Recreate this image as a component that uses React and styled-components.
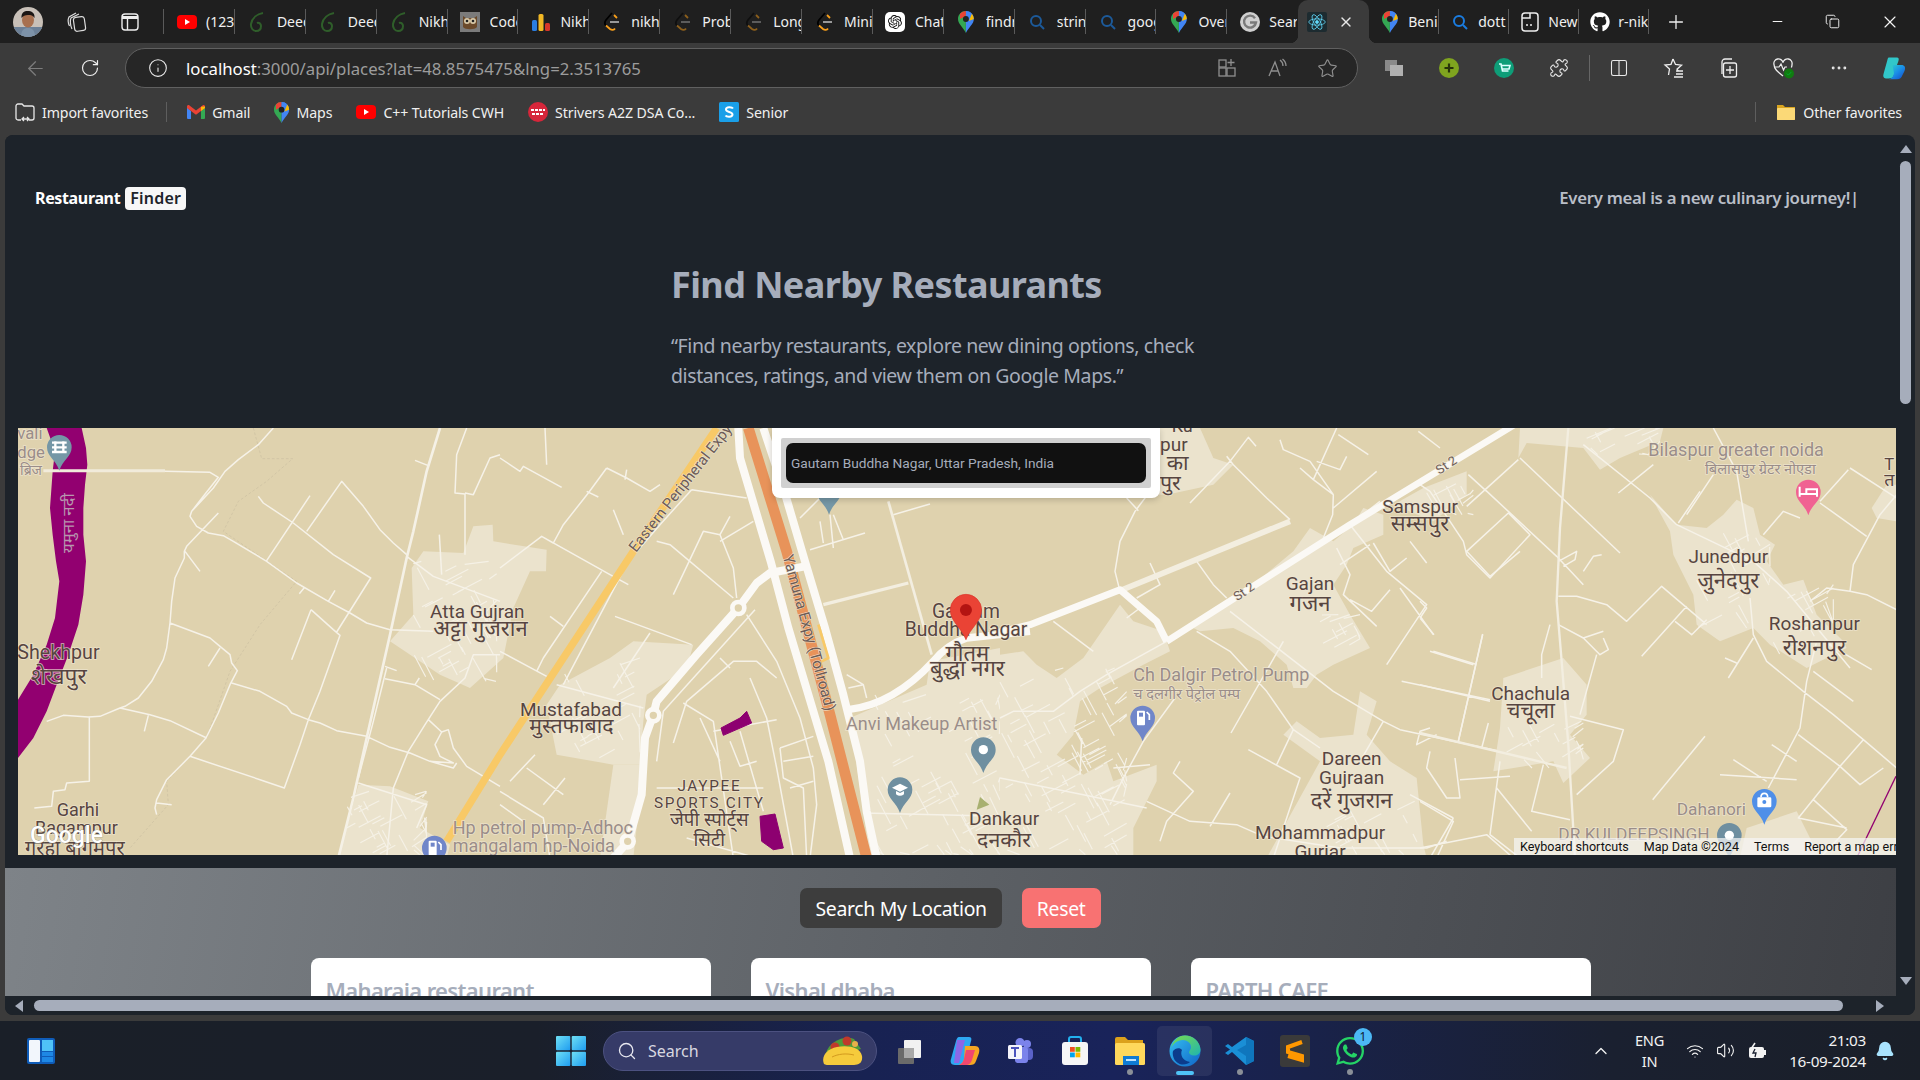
import React from 'react';
import styled, { createGlobalStyle } from 'styled-components';
import { ArrowLeft, RotateCw, Info, Star, Plus, Minus, X, Copy, Ellipsis, ChevronUp, Wifi, Volume2, Bell, Search, Puzzle, Columns2 } from 'lucide-react';
import { FaGithub, FaWhatsapp } from 'react-icons/fa';
import { SiOpenai } from 'react-icons/si';

const UI = '"Noto Sans", "Open Sans", Arial, sans-serif';
const MAP = 'Roboto, "Noto Sans", "Noto Sans Devanagari", sans-serif';

const Global = createGlobalStyle`
  html, body { margin: 0; padding: 0; background: #3b3b3b; overflow: hidden; }
  * { box-sizing: border-box; }
`;

const Screen = styled.div`
  width: 1920px; height: 1080px; display: flex; flex-direction: column; overflow: hidden;
  background: #3b3b3b; font-family: ${UI}; color: #fff;
`;

/* ---------- tab strip ---------- */
const TabStrip = styled.div`
  height: 43px; background: #1f1f1f; display: flex; align-items: stretch; flex: none;
`;
const Leading = styled.div`
  width: 164px; display: flex; align-items: center; padding-left: 13px; gap: 23px; flex: none; position: relative;
  &::after { content: ''; position: absolute; right: 0; top: 9px; height: 25px; width: 1px; background: #5a5a5a; }
`;
const VerticalSlot = styled.span`
  margin-left: 10px; display: flex;
`;
const Tab = styled.div`
  width: ${p => p.$w || 70.9}px; flex: none; position: relative; display: flex; align-items: center;
  &::after { content: ''; position: absolute; right: 0; top: 9px; height: 25px; width: 1px; background: ${p => p.$noSep ? 'transparent' : '#5a5a5a'}; }
`;
const TabIconSlot = styled.span`
  width: ${p => p.$w || 42}px; flex: none; display: flex; align-items: center; justify-content: center; padding-left: 3px;
`;
const TabLabel = styled.span`
  font-size: 14px; color: #f0f0f0; white-space: nowrap; overflow: hidden; flex: 1; margin-right: 1px; line-height: 20px;
`;
const ActiveTab = styled.div`
  width: 71px; flex: none; background: #3b3b3b; border-radius: 10px 10px 0 0; position: relative;
  display: flex; align-items: center; padding-left: 9px; gap: 11px;
  &::before, &::after { content: ''; position: absolute; bottom: 0; width: 8px; height: 8px; }
  &::before { left: -8px; background: radial-gradient(circle at 0 0, transparent 8px, #3b3b3b 8.5px); }
  &::after { right: -8px; background: radial-gradient(circle at 100% 0, transparent 8px, #3b3b3b 8.5px); }
`;
const ReactChip = styled.span`
  width: 20px; height: 20px; background: #1d2b30; border-radius: 2px; display: flex; align-items: center; justify-content: center;
`;
const NewTab = styled.div`
  width: 54px; display: flex; align-items: center; justify-content: center; flex: none;
`;
const WindowControls = styled.div`
  margin-left: auto; display: flex; align-items: center; width: 172px; flex: none; justify-content: space-between; padding: 0 20px 0 22px;
`;

/* ---------- toolbar ---------- */
const Toolbar = styled.div`
  height: 50px; background: #3b3b3b; display: flex; align-items: center; flex: none; padding: 0 6px 0 24px;
`;
const NavButtons = styled.div`
  display: flex; align-items: center; gap: 33px; width: 101px; flex: none;
`;
const AddressBar = styled.div`
  width: 1233px; height: 40px; flex: none; border: 1px solid #606060; border-radius: 20px; background: #262626;
  display: flex; align-items: center; padding: 0 19px 0 22px;
`;
const UrlText = styled.div`
  font-size: 16.75px; margin-left: 18px; color: #9c9c9c; white-space: nowrap; flex: 1; letter-spacing: 0;
  b { font-weight: 400; color: #fff; }
`;
const AddressTools = styled.div`
  display: flex; align-items: center; gap: 30px; color: #8f8f8f;
`;
const ToolGroup = styled.div`
  display: flex; align-items: center; gap: 31px; padding-left: 24px;
`;
const ToolSlot = styled.span`
  width: 24px; height: 24px; display: flex; align-items: center; justify-content: center; flex: none; color: #e8e8e8;
`;
const ToolSep = styled.span`
  width: 1px; height: 26px; background: #666; margin: 0 -13.5px; flex: none;
`;

/* ---------- bookmarks ---------- */
const Bookmarks = styled.div`
  height: 42px; background: #3b3b3b; display: flex; align-items: center; flex: none; padding: 0 18px 4px 15px;
`;
const Bookmark = styled.div`
  display: flex; align-items: center; gap: 7px; font-size: 14.15px; color: #f0f0f0; white-space: nowrap; margin-right: ${p => p.$mr ?? 24}px; letter-spacing: -0.1px;
`;
const BookSep = styled.span`
  width: 1px; height: 20px; background: #5e5e5e; flex: none; margin: 0 20px 0 18px;
`;
const BookRight = styled.div`
  margin-left: auto; display: flex; align-items: center;
`;

/* ---------- page window ---------- */
const WindowBody = styled.div`
  height: 880px; flex: none; margin: 0 5px 6px 5px; background: #1d232a; border-radius: 8px; display: flex; flex-direction: column; overflow: hidden;
`;
const ScrollRow = styled.div`
  flex: 1; display: flex; min-height: 0;
`;
const Page = styled.main`
  width: 1891px; flex: none; display: flex; flex-direction: column; overflow: hidden; background: #1d232a;
`;
const Nav = styled.nav`
  height: 130px; padding: 51px 37px 0 30px; display: flex; justify-content: space-between; align-items: flex-start; flex: none;
`;
const Brand = styled.div`
  display: flex; align-items: center; font-size: 16px; font-weight: 700; color: #fff; height: 24px; letter-spacing: -0.35px; gap: 4px;
`;
const BrandBadge = styled.span`
  background: #f7f7f7; color: #1d232a; border-radius: 4px; padding: 0 5px; height: 23px; line-height: 23px; font-weight: 600; letter-spacing: 0.2px; margin-left: 1px;
`;
const Tagline = styled.div`
  font-size: 16.8px; font-weight: 600; color: #b9bec7; line-height: 24px; letter-spacing: -0.28px; white-space: nowrap; margin-top: 0;
`;
const Hero = styled.section`
  margin-left: 666px; width: 600px; flex: none; margin-bottom: 36px;
`;
const Title = styled.h1`
  margin: 0 0 26px; font-size: 36px; line-height: 40px; font-weight: 700; color: #a6adbb; letter-spacing: -0.58px;
`;
const Lead = styled.p`
  margin: 0 0 1px; font-size: 19.5px; line-height: 30px; color: #a6adbb; width: 560px; letter-spacing: -0.4px;
`;
const MapFrame = styled.div`
  width: 1878px; height: 427px; margin-left: 13px; flex: none; position: relative; overflow: hidden; background: #dfd2ae;
  svg { display: block; }
`;
const PopupCard = styled.div`
  position: absolute; left: 754px; top: 0; width: 388px; height: 70px; background: #fff; border-radius: 0 0 8px 8px;
  padding: 10px 9px 0; box-shadow: 0 2px 6px rgba(0,0,0,.18);
`;
const PopupWell = styled.div`
  background: #d0d0d0; padding: 5px; height: 50px; border-radius: 2px;
`;
const PopupInput = styled.div`
  height: 40px; background: #111; border-radius: 7px; color: #a6adbb; font-family: Roboto, sans-serif; font-size: 13.7px;
  display: flex; align-items: center; padding-left: 5px; white-space: nowrap;
`;
const Attribution = styled.div`
  position: absolute; left: 1496px; bottom: 0; height: 17px; width: 400px; background: rgba(245,245,245,.72);
  display: flex; align-items: center; font-family: Roboto, sans-serif; font-size: 12.55px; color: #111; white-space: nowrap; padding-left: 6px;
  span { margin-right: 15px; }
`;
const Results = styled.section`
  flex: 1; margin-top: 13px; min-height: 0; background: linear-gradient(100deg, #7e8388 0%, #5c6065 50%, #3d3f44 100%);
  padding-top: 20px; overflow: hidden;
`;
const ActionRow = styled.div`
  display: flex; justify-content: center; gap: 20px;
`;
const ActionButton = styled.button`
  height: 40px; border: 0; border-radius: 7px; padding: 0 15px; font-family: ${UI}; font-size: 19.4px; letter-spacing: -0.3px;
  color: #fff; background: ${p => p.$danger ? '#f87272' : '#3d3d3d'};
`;
const CardRow = styled.div`
  display: flex; justify-content: center; gap: 40px; margin-top: 30px;
`;
const Card = styled.article`
  width: 400px; height: 120px; background: #fff; border-radius: 8px; padding: 16px 15px;
`;
const CardTitle = styled.h2`
  margin: 0; font-size: 22px; line-height: 32px; font-weight: 600; color: #a6adbb; letter-spacing: -0.65px;
`;
const VScroll = styled.div`
  flex: 1; display: flex; flex-direction: column; align-items: center; padding: 10px 0 11px; color: #a6adbb;
`;
const VThumb = styled.div`
  width: 11px; height: 243px; background: #a6adbb; border-radius: 6px; margin: 8px 0 auto;
`;
const HScroll = styled.div`
  height: 19px; flex: none; display: flex; align-items: center; padding: 0 28px 0 10px; gap: 11px; background: #1d232a;
`;
const HThumb = styled.div`
  width: 1809px; height: 11px; background: #a6adbb; border-radius: 6px; flex: none;
`;
const ArrowUp = styled.span`
  width: 0; height: 0; border-left: 6px solid transparent; border-right: 6px solid transparent; border-bottom: 8px solid currentColor;
`;
const ArrowDown = styled.span`
  width: 0; height: 0; border-left: 6px solid transparent; border-right: 6px solid transparent; border-top: 8px solid currentColor;
`;
const ArrowL = styled.span`
  width: 0; height: 0; border-top: 6px solid transparent; border-bottom: 6px solid transparent; border-right: 8px solid #a6adbb; flex: none;
`;
const ArrowR = styled.span`
  width: 0; height: 0; border-top: 6px solid transparent; border-bottom: 6px solid transparent; border-left: 8px solid #a6adbb; flex: none; margin-left: 22px;
`;

/* ---------- taskbar ---------- */
const Taskbar = styled.footer`
  height: 59px; flex: 1; display: grid; grid-template-columns: 556px auto 1fr; align-items: center; position: relative;
  background: linear-gradient(90deg, #1a1f28 0%, #1a1f2a 28%, #182252 45%, #19235a 58%, #19224a 68%, #1a2030 84%, #1a1f28 100%);
`;
const TaskLeft = styled.div`
  padding-left: 26px; display: flex; align-items: center;
`;
const TaskCenter = styled.div`
  display: flex; align-items: center;
`;
const StartSlot = styled.div`
  width: 47px; flex: none; display: flex;
`;
const SearchPill = styled.div`
  width: 274px; height: 40px; flex: none; border-radius: 20px; background: #363b68; border: 1px solid #4c5180; display: flex; align-items: center; padding: 0 12px 0 13px;
  font-size: 16px; color: #d8d8e0; gap: 11px; margin-right: 5px;
  svg:last-child { margin-left: auto; }
`;
const TaskSlot = styled.div`
  width: 55px; height: 50px; flex: none; position: relative; display: flex; align-items: center; justify-content: center;
  border-radius: 5px; background: ${p => p.$active ? 'rgba(255,255,255,.07)' : 'transparent'};
  &::after {
    content: ''; display: ${p => p.$dot ? 'block' : 'none'}; position: absolute; bottom: 1px; left: 50%; transform: translateX(-50%);
    width: ${p => p.$active ? 18 : 6}px; height: ${p => p.$active ? 4 : 6}px; border-radius: 3px; background: ${p => p.$active ? '#4fc3f7' : '#8a8f98'};
  }
`;
const Badge = styled.span`
  position: absolute; top: 2px; right: 5px; width: 18px; height: 18px; border-radius: 50%; background: #4cb8f5; color: #102030; font-size: 12px; display: flex; align-items: center; justify-content: center;
`;
const Tray = styled.div`
  display: flex; align-items: center; justify-content: flex-end; padding-right: 25px; color: #f2f2f2;
`;
const Lang = styled.div`
  font-size: 14.6px; line-height: 21px; text-align: center; margin: 0 22px 0 24px; letter-spacing: -0.2px;
`;
const TrayIcons = styled.div`
  display: flex; align-items: center; gap: 12px; margin-right: 22px;
`;
const Clock = styled.div`
  font-size: 15.3px; line-height: 21px; text-align: right; margin-right: 9px; letter-spacing: -0.3px;
`;

/* ---------- icons ---------- */
const Yt = ({ s = 20 }) => <svg width={s} height={s} viewBox="0 0 20 20"><rect x="0" y="3" width="20" height="14" rx="4" fill="#f00" /><path d="M8 7l5 3-5 3z" fill="#fff" /></svg>;
const Leaf = () => <svg width="16" height="20" viewBox="0 0 16 20" fill="none" stroke="#2f5e2a" strokeWidth="2"><path d="M14 1C8 2 3 6 2 12c-.5 4 2 7 5 7 3 0 5-2 5-5 0-2-2-4-4-3" /></svg>;
const Owl = () => <svg width="20" height="20" viewBox="0 0 20 20"><rect width="20" height="20" fill="#7b7b7b" /><path d="M3 4l3 2h8l3-2v11c-2 3-12 3-14 0z" fill="#6b4a2b" /><circle cx="7" cy="9" r="3" fill="#d8c9a8" /><circle cx="13" cy="9" r="3" fill="#d8c9a8" /><circle cx="7" cy="9" r="1.3" fill="#222" /><circle cx="13" cy="9" r="1.3" fill="#222" /></svg>;
const Bars = () => <svg width="20" height="20" viewBox="0 0 20 20"><rect x="1" y="8" width="5" height="11" rx="1.5" fill="#2a7de1" /><rect x="7.5" y="2" width="5" height="17" rx="1.5" fill="#f2b824" /><rect x="14" y="11" width="5" height="8" rx="1.5" fill="#d8362a" /></svg>;
const Lc = ({ dim }) => <svg width="18" height="20" viewBox="0 0 18 20" fill="none" strokeWidth="1.8" opacity={dim ? .5 : 1}><path d="M9 1L3 8c-1.500 2-1.500 4 0 5.500" stroke="#000" /><path d="M3 13.500L7 17c2 1.500 4 1 5-.5" stroke="#f89f1b" /><path d="M11 3l3 3" stroke="#f89f1b" /><path d="M7 10h9" stroke="#a8a8a8" /></svg>;
const Gpt = () => <svg width="20" height="20" viewBox="0 0 20 20"><rect width="20" height="20" rx="5" fill="#fff" /><g transform="translate(3 3) scale(.58)"><SiOpenai size={24} color="#111" /></g></svg>;
const MapsIcon = ({ s = 22 }) => <svg width={s * .72} height={s} viewBox="0 0 16 22"><path d="M8 0C3.6 0 0 3.5 0 8c0 5 5 8 8 14z" fill="#34a853" /><path d="M8 0c4.4 0 8 3.5 8 8 0 5-5 8-8 14z" fill="#4285f4" /><path d="M2 2.6A8 8 0 0 1 8 0v5L2 8z" fill="#ea4335" /><path d="M8 0a8 8 0 0 1 6 2.6L8 8z" fill="#4285f4" /><path d="M14 2.6A8 8 0 0 1 16 8l-5 2z" fill="#fbbc04" /><circle cx="8" cy="8" r="3" fill="#222" /></svg>;
const Magn = ({ c = '#1c5a9a' }) => <svg width="18" height="18" viewBox="0 0 18 18" fill="none" stroke={c} strokeWidth="2"><circle cx="8" cy="8" r="5" /><path d="M12 12l4 4" /></svg>;
const GG = () => <svg width="20" height="20" viewBox="0 0 20 20" fill="none"><circle cx="10" cy="10" r="10" fill="#d0d0d0" /><path d="M15 6.2A6 6 0 1 0 16 10.5h-6" stroke="#7a7a7a" strokeWidth="2.4" /></svg>;
const Atom = () => <svg width="18" height="18" viewBox="-12 -12 24 24" fill="none" stroke="#61dafb" strokeWidth="1"><circle r="2" fill="#61dafb" /><ellipse rx="11" ry="4.2" /><ellipse rx="11" ry="4.2" transform="rotate(60)" /><ellipse rx="11" ry="4.2" transform="rotate(120)" /></svg>;
const NewWin = () => <svg width="18" height="20" viewBox="0 0 18 20" fill="none" stroke="#eee" strokeWidth="1.5"><rect x="1" y="1" width="16" height="18" rx="3" /><path d="M1 6h8V1" /><path d="M5 13h8" strokeDasharray="2 2" /></svg>;
const Gh = () => <FaGithub size={20} color="#fff" />;

const favicon = { yt: <Yt />, leaf: <Leaf />, owl: <Owl />, bars: <Bars />, lc: <Lc />, lcd: <Lc dim />, gpt: <Gpt />, maps: <MapsIcon />, sd: <Magn />, sb: <Magn c="#1a7ce0" />, gg: <GG />, nw: <NewWin />, gh: <Gh /> };

const Avatar = () => <svg width="30" height="30" viewBox="0 0 30 30"><defs><clipPath id="av"><circle cx="15" cy="15" r="15" /></clipPath></defs><g clipPath="url(#av)"><rect width="30" height="30" fill="#c8c0b8" /><rect y="20" width="30" height="10" fill="#6c8097" /><path d="M8 30c0-7 3-9 7-9s7 2 7 9z" fill="#7d92a8" /><ellipse cx="15" cy="13" rx="6" ry="7.5" fill="#a8704f" /><path d="M8.5 11C8 5 12 3.5 16 4c4 .5 6 3 5.5 7-1.5-2.5-3.5-3-6.5-3s-5 1-6.5 3z" fill="#1b1614" /></g></svg>;
const Workspaces = () => <svg width="22" height="22" viewBox="0 0 22 22" fill="none" stroke="#ddd" strokeWidth="1.2"><rect x="8" y="6" width="11" height="14" rx="2.5" transform="rotate(-8 13 13)" /><path d="M6 18C4 14 4 9 5 7l8-4" /><path d="M3.500 15C2 12 2 8 3 6l7-4" /></svg>;
const VerticalTabs = () => <svg width="18" height="18" viewBox="0 0 18 18" fill="none" stroke="#eee" strokeWidth="1.4"><rect x="1" y="1" width="16" height="16" rx="3" /><path d="M1 4.5h16" strokeWidth="3" /><path d="M6.5 4.5V17" /></svg>;
const SplitAdd = () => <svg width="20" height="20" viewBox="0 0 20 20" fill="none" stroke="#8f8f8f" strokeWidth="1.3"><rect x="2" y="2" width="7" height="7" /><rect x="2" y="10" width="7" height="8" /><rect x="10" y="10" width="8" height="8" /><path d="M14 1v7M10.5 4.500h7" /></svg>;
const ReadAloud = () => <svg width="20" height="20" viewBox="0 0 20 20" fill="none" stroke="#8f8f8f" strokeWidth="1.3"><path d="M2 18L8 4l5 14M4.500 13h7" /><path d="M13 2c2 1.500 3 3.500 3 6M15.500 1c2.500 2 3.500 4.500 3.500 7" /></svg>;
const GrayTabs = () => <svg width="20" height="20" viewBox="0 0 20 20"><rect x="1" y="2" width="12" height="11" fill="#8a8a8a" /><rect x="6" y="7" width="13" height="11" fill="#b0b0b0" /></svg>;
const GreenPlus = () => <svg width="20" height="20" viewBox="0 0 20 20"><circle cx="10" cy="10" r="10" fill="#7fa41f" /><path d="M10 5.500v9M5.500 10h9" stroke="#27320a" strokeWidth="2.2" /></svg>;
const Cart = () => <svg width="20" height="20" viewBox="0 0 20 20"><circle cx="10" cy="10" r="10" fill="#0e9d78" /><path d="M5 6h2l1.500 7h6M8 7.500h8l-1 3.500H8.500" fill="none" stroke="#dff" strokeWidth="1.6" /></svg>;
const Collections = () => <svg width="22" height="22" viewBox="0 0 22 22" fill="none" stroke="#eee" strokeWidth="1.3"><rect x="5.500" y="6" width="13" height="14" rx="2" /><path d="M12 9v8M8 13h8" /><path d="M4 17V5a3 3 0 0 1 3-3h7" /></svg>;
const FavList = () => <svg width="22" height="22" viewBox="0 0 22 22" fill="none" stroke="#eee" strokeWidth="1.3"><path d="M10 2l2.500 5.500 6 .7-4.500 4 1.300 2M5.500 18l1-6-4.500-4 6-.7L10 2" /><path d="M13 14h7M13 17h7M11 20h9" /></svg>;
const HeartCheck = () => <svg width="24" height="24" viewBox="0 0 24 24" fill="none"><path d="M11 20C6 16 2 13 2 8.500A4.500 4.500 0 0 1 11 6.500 4.500 4.500 0 0 1 20 8.500c0 1-.2 2-.6 3" stroke="#eee" strokeWidth="1.3" /><path d="M3 11h4l2-3 2.500 6L13 11h2" stroke="#eee" strokeWidth="1.2" /><circle cx="17" cy="17.500" r="5" fill="#107c10" /><path d="M14.800 17.500l1.600 1.600 2.800-3" stroke="#0a3" strokeWidth="1" /></svg>;
const CopilotTb = () => <svg width="32" height="32" viewBox="0 0 32 32"><defs><linearGradient id="cb" x1="0" y1="0" x2="1" y2="1"><stop offset="0" stopColor="#2fd6c4" /><stop offset=".5" stopColor="#1a8fe8" /><stop offset="1" stopColor="#1549c8" /></linearGradient></defs><path d="M9 2h11c4 0 2 5 0 10l-3 10c-1 4-2 8-8 8H5c-3 0-4-3-3-6L7 6c.4-2 1-4 2-4z" fill="#31c7c9" /><path d="M14 12h12c4 0 6 3 4 8l-3 6c-1 3-3 5-7 5H9c5-1 6-4 7-8z" fill="url(#cb)" /></svg>;
const ImportFav = () => <svg width="20" height="20" viewBox="0 0 20 20" fill="none" stroke="#e8e8e8" strokeWidth="1.3"><path d="M6 18H3a2 2 0 0 1-2-2V4a2 2 0 0 1 2-2h4l2 2h8a2 2 0 0 1 2 2v10a2 2 0 0 1-2 2h-3" /><path d="M7 17h7M9 15l-2 2 2 2M12 15l2 2-2 2" /></svg>;
const Gmail = () => <svg width="18" height="14" viewBox="0 0 18 14"><path d="M0 2.500V13a1 1 0 0 0 1 1h3V6z" fill="#4285f4" /><path d="M18 2.500V13a1 1 0 0 1-1 1h-3V6z" fill="#34a853" /><path d="M0 1.500C0 .2 1.500-.4 2.500.4L9 5.500 15.500.4C16.500-.4 18 .2 18 1.500v1.500l-4 3-5 3.800L4 6 0 3z" fill="#ea4335" /><path d="M14 1.800L18 1.500V3l-4 3z" fill="#fbbc04" /></svg>;
const Tuf = () => <svg width="20" height="20" viewBox="0 0 20 20"><circle cx="10" cy="10" r="10" fill="#d6263a" /><path d="M3 8h14M4 12h12" stroke="#fff" strokeWidth="2.200" strokeDasharray="3 1" /></svg>;
const SBook = () => <svg width="20" height="20" viewBox="0 0 20 20"><rect width="20" height="20" rx="1.500" fill="#1a9fe8" /><path d="M14 6.500C13 5 7 4.500 7 7.500c0 3 6.500 2 6.500 5 0 3-6 2.500-7 1" fill="none" stroke="#fff" strokeWidth="2" /></svg>;
const Folder = () => <svg width="20" height="20" viewBox="0 0 20 20"><path d="M1 3h6l2 2h10v13H1z" fill="#d9a520" /><rect x="1" y="6" width="18" height="12" rx="1" fill="#fbd977" /></svg>;

const Widgets = () => <svg width="30" height="30" viewBox="0 0 30 30"><rect x="1" y="2" width="28" height="26" rx="2" fill="#0f5cb8" /><rect x="3" y="4" width="11" height="22" rx="1" fill="#f2f6fc" /><rect x="16" y="4" width="11" height="11" fill="#4fc3f7" /><rect x="16" y="16" width="11" height="4" fill="#1e88e5" /><rect x="16" y="21" width="11" height="5" fill="#1e88e5" /></svg>;
const WinLogo = () => <svg width="30" height="30" viewBox="0 0 30 30"><defs><linearGradient id="wl" x1="0" y1="0" x2="1" y2="1"><stop offset="0" stopColor="#6fe0f5" /><stop offset="1" stopColor="#1e9cf0" /></linearGradient></defs><rect x="0" y="0" width="14.300" height="14.300" rx="1" fill="url(#wl)" /><rect x="15.700" y="0" width="14.300" height="14.300" rx="1" fill="url(#wl)" /><rect x="0" y="15.700" width="14.300" height="14.300" rx="1" fill="url(#wl)" /><rect x="15.700" y="15.700" width="14.300" height="14.300" rx="1" fill="url(#wl)" /></svg>;
const Taco = () => <svg width="42" height="32" viewBox="0 0 42 32"><path d="M4 18C7 7 22 0 32 4l7 10-30 9z" fill="#4f9a3a" /><circle cx="13" cy="12" r="4.500" fill="#c0392b" /><circle cx="25" cy="6" r="4.500" fill="#c0392b" /><circle cx="33" cy="9" r="3" fill="#e8b04a" /><path d="M2 29c-3-7 2-15 13-17 11-2 23 0 25 9 1 6-3 9-8 9H9c-3 0-6 0-7-1z" fill="#f6cb3c" /><path d="M10 22c6-3 14-4 22-2" stroke="#d39a1e" strokeWidth="1" fill="none" /></svg>;
const TaskView = () => <svg width="28" height="28" viewBox="0 0 28 28"><rect x="2" y="11" width="16" height="16" rx="1" fill="#6a6a6a" /><rect x="8" y="3" width="17" height="18" rx="1" fill="#f2f2f2" /><rect x="8" y="11" width="10" height="10" fill="#a9a9a9" /></svg>;
const CopilotBar = () => <svg width="30" height="30" viewBox="0 0 30 30"><path d="M9 1h10c4 0 2 4 1 8l-4 14c-1 4-3 6-7 6H5c-4 0-5-3-4-6L6 5c.5-2 1.500-4 3-4z" fill="#2ea8f2" /><path d="M7 4h8L9 27H4z" fill="#9b5de5" opacity=".85" /><path d="M15 10h10c4 0 5 3 4 7l-3 8c-1 3-3 4-6 4H9c3-1 4-3 5-6z" fill="#f5a623" /><path d="M16 14h9l-3 10c-1 3-3 5-6 5H9c3-1 4-3 5-6z" fill="#f0476f" /></svg>;
const Teams = () => <svg width="28" height="28" viewBox="0 0 28 28"><circle cx="21" cy="7" r="4" fill="#7b83eb" /><rect x="14" y="11" width="13" height="12" rx="4" fill="#5a62c8" /><circle cx="14" cy="5.500" r="4.500" fill="#7b83eb" /><rect x="9" y="10" width="13" height="16" rx="3" fill="#7b83eb" /><rect x="2" y="8" width="14" height="14" rx="1.500" fill="#f4f4fb" /><path d="M5 11h8M9 11v9" stroke="#4b53bc" strokeWidth="2" /></svg>;
const Store = () => <svg width="28" height="30" viewBox="0 0 28 30"><path d="M8 6V3a2 2 0 0 1 2-2h8a2 2 0 0 1 2 2v3" fill="none" stroke="#22b0ee" strokeWidth="2" /><rect x="1" y="6" width="26" height="23" rx="3" fill="#f6f6f6" /><rect x="9" y="11" width="4.800" height="4.800" fill="#f25022" /><rect x="14.500" y="11" width="4.800" height="4.800" fill="#7fba00" /><rect x="9" y="16.500" width="4.800" height="4.800" fill="#00a4ef" /><rect x="14.500" y="16.500" width="4.800" height="4.800" fill="#ffb900" /></svg>;
const Explorer = () => <svg width="30" height="30" viewBox="0 0 30 30"><path d="M0 3a2 2 0 0 1 2-2h8l3 3h15v22H0z" fill="#dca11c" /><rect y="7" width="30" height="22" rx="1.500" fill="#ffd85c" /><rect x="8" y="20" width="16" height="9" fill="#0f7bd4" /><rect x="11" y="23" width="10" height="2" fill="#bfe3ff" /></svg>;
const Edge = () => <svg width="32" height="32" viewBox="0 0 32 32"><defs><linearGradient id="eg" x1="0" y1="0" x2="1" y2="1"><stop offset="0" stopColor="#35c1f1" /><stop offset="1" stopColor="#1065c8" /></linearGradient><linearGradient id="eg2" x1="0" y1="0" x2="1" y2="1"><stop offset="0" stopColor="#7bdc4b" /><stop offset="1" stopColor="#1fb5b0" /></linearGradient></defs><circle cx="16" cy="16" r="15.500" fill="url(#eg)" /><path d="M2 13C4 5 10 .5 16 .5c8 0 15 6 15.500 14 0 4-3 6-6.500 6-3 0-5-1.500-5-3 0-2 2-3 2-5.500 0-4-4-7-8-7C8 5 4 9 2 13z" fill="url(#eg2)" /><path d="M13 15c-2 4 0 11 8 12-2 2-8 4-12 1-4-2-6-8-5-12 2-3 7-4 9-1z" fill="#0c3c8c" /></svg>;
const VsCode = () => <svg width="30" height="30" viewBox="0 0 30 30"><path d="M21 1l8 4v20l-8 4L7 16l-4 3-3-2 5-3.500L0 10l3-2 4 3z" fill="#1a8fd6" /><path d="M21 1l8 4v20l-8 4V20l-9-6 9-5z" fill="#0f76bd" /></svg>;
const Sublime = () => <svg width="30" height="32" viewBox="0 0 30 32"><rect width="30" height="32" rx="3" fill="#3a3a3a" /><path d="M22 7L8 12v5l14 4v4L8 21" fill="none" stroke="#ff9800" strokeWidth="4" /></svg>;
const BatteryPlug = () => <svg width="20" height="20" viewBox="0 0 20 20" fill="none"><path d="M8 2L4 8" stroke="#f2f2f2" strokeWidth="1.500" /><rect x="2" y="6" width="15" height="11" rx="2" fill="#f2f2f2" /><rect x="17" y="9" width="2" height="5" fill="#f2f2f2" /><path d="M8 8l-2 4h3l-1 4" stroke="#1a2030" strokeWidth="1.300" /></svg>;

const MapPin = ({ x, y, c, kind }) => (
  <g transform={`translate(${x} ${y})`}>
    <path d="M-37 0a37 37 0 1 1 74 0c0 28-26 36-37 70C-11 36-37 28-37 0z" fill={c} />
    {kind === 'dot' && <circle r="14" fill="#fff" />}
    {kind === 'hat' && <g fill="#fff"><path d="M-24 -6L0 -18 24 -6 0 6z" /><path d="M-12 4v10c8 6 16 6 24 0V4L0 10z" /></g>}
    {kind === 'bridge' && <path d="M-22 -14h44M-22 14h44M-12 -18v34M12 -18v34M-22 0h44" stroke="#fff" strokeWidth="7" fill="none" />}
    {kind === 'fuel' && <g fill="#fff"><rect x="-17" y="-22" width="24" height="44" rx="3" /><rect x="-11" y="-16" width="12" height="12" fill={c} /><path d="M12 -18l8 8v16" stroke="#fff" strokeWidth="5" fill="none" /></g>}
    {kind === 'bed' && <path d="M-26 -16v30M-26 6h52v8M26 6v-14H-6v14" stroke="#fff" strokeWidth="6" fill="none" />}
    {kind === 'bag' && <g><rect x="-21" y="-12" width="42" height="30" rx="4" fill="#fff" /><path d="M-10 -12c0-16 20-16 20 0" fill="none" stroke="#fff" strokeWidth="5" /><circle r="6" cy="2" fill={c} /></g>}
  </g>
);

const rnd = (seed) => { let s = seed; return () => { s = (s * 16807) % 2147483647; return s / 2147483647; }; };
const clutter = (seed, x, y, w, h, n, ang = -28) => {
  const r = rnd(seed); let d = '';
  const rad = ang * Math.PI / 180;
  for (let i = 0; i < n; i++) {
    const px = x + r() * w, py = y + r() * h, len = 25 + r() * 60;
    const a = r() > .5 ? rad : rad + Math.PI / 2;
    const qx = Math.min(x + w, Math.max(x, px + Math.cos(a) * len)), qy = Math.min(y + h, Math.max(y, py + Math.sin(a) * len));
    d += `M${px.toFixed(0)} ${py.toFixed(0)}L${qx.toFixed(0)} ${qy.toFixed(0)}`;
  }
  return d;
};

const regions = [
  {
    x0: 0,
    patches: [
      '1270,370 1390,375 1420,295 1478,290 1480,340 1640,365 1638,430 1590,430 1540,540 1510,690 1410,780 1320,740 1170,640 1240,560 1235,420',
      '1075,1070 1170,1075 1285,1120 1260,1200 1350,1250 1340,1290 1015,1290',
    ],
    clutter: [[11, 1240, 400, 250, 360, 46], [12, 1040, 1090, 240, 190, 34]],
    roads: [
      'M495 130L630 133L655 148L610 205L575 250',
      'M820 0L775 50L715 95L675 130L640 180L575 250L570 265L590 295L625 315L670 323L700 340L800 400L890 465L985 520L1050 555L1100 585L1170 605L1300 610',
      'M655 255L560 355L553 370L553 390L525 450L515 520L510 585L500 660L490 695L455 760L415 810L375 835L360 840L300 865L265 867L190 862L140 880',
      'M555 370L600 430',
      'M775 205L790 225L880 285L1000 380L1112 450L1010 612',
      'M930 203L800 398', 'M920 310L1025 160L1090 235L1140 305L1180 345L1220 380', 'M1005 487L985 520', 'M912 480L898 497',
      'M510 585L630 630L660 655L690 680L695 705L712 728L690 770L655 855L618 930L570 985L500 1055L470 1115L465 1140L470 1160',
      'M660 660L625 715', 'M933 545L1000 605L1020 622L960 790L925 875L900 950L853 1080L780 1055L570 985', 'M933 545L875 695',
      'M360 840L450 860L510 878L620 930', 'M445 862L433 910',
      'M695 765L780 790L860 835L875 855L925 875L960 885L1010 908L1100 925L1170 958L1230 975L1290 1000L1360 1020L1370 1005',
      'M268 867L268 1060L200 1065L195 1085L160 1090L155 1135L103 1140',
      'M1160 720L1120 880L1075 1050', 'M1155 715L1190 728', 'M1155 752L1245 770L1320 815', 'M1245 770L1258 750',
      'M1395 195L1420 200L1470 90L1500 80', 'M1400 0L1370 80L1365 195L1395 198L1395 380', 'M1245 97L1285 113', 'M1318 320L1325 440',
      'M1220 385L1300 445L1500 520', 'M1500 680L1420 680L1395 750L1320 820L1275 890L1225 970L1180 1080L1160 1290',
      'M1285 875L1325 912L1345 905L1360 960L1400 1015L1500 1075', 'M1325 912L1305 950L1320 985L1360 1005L1290 1000',
      'M1075 1065L1280 1130L1250 1200', 'M470 1125L515 1130',
    ],
    majors: [['M130 128L495 128', 9, '#f1ebdb'], ['M1320 0L1280 130L1240 310L1220 390L1170 620L1100 930L1060 1110L1015 1290', 8, '#f5f1e6']],
    dashed: ['M760 0L785 92L878 92L800 160L715 220L670 310L890 460L780 590L690 730L620 930L500 1060L505 1130L390 1260'],
    river: '140,0 245,0 258,60 262,110 255,170 250,240 250,320 258,400 250,500 235,590 205,680 170,770 140,850 100,930 54,990 54,815 100,740 140,650 165,570 178,460 168,400 158,320 150,240 158,130 165,70',
    pins: [{ x: 178, y: 58, c: '#7597a6', kind: 'bridge' }, { x: 1303, y: 1260, c: '#7086c9', kind: 'fuel' }],
    labels: [
      ['vali', 52, 33, 50, 'g'], ['dge', 52, 90, 50, 'g'], ['ब्रिज', 60, 142, 42, 'g'],
      ['Shekhpur', 52, 692, 59, 'd'], ['शेखपुर', 92, 768, 68, 'd'],
      ['Garhi', 170, 1165, 54, 'd'], ['Bagampur', 105, 1217, 54, 'd'], ['गरहा बागमपुर', 75, 1282, 60, 'd'],
      ['Atta Gujran', 1290, 570, 57, 'd'], ['अट्टा गुजरान', 1300, 625, 66, 'd'],
      ['Hp petrol pump-Adhoc', 1358, 1218, 54, 'g'], ['mangalam hp-Noida', 1358, 1272, 54, 'g'],
    ],
  },
  {
    x0: 500,
    patches: [
      '180,770 330,690 400,640 580,650 560,720 440,800 430,880 420,1010 340,1010 170,980 140,830',
      '340,1010 430,1010 400,1290 300,1290',
      '1050,870 1210,800 1280,770 1290,700 1500,660 1500,1290 1110,1290',
    ],
    clutter: [[21, 170, 690, 250, 300, 26], [22, 1120, 800, 380, 480, 70]],
    roads: [
      'M0 90L60 130L70 115L185 178', 'M135 0L140 110', 'M320 120L265 195L190 290L160 345L125 325L0 420', 'M320 120L380 150L450 190L480 170',
      'M260 190L295 207', 'M340 245L370 320', 'M380 125L375 155', 'M575 185L740 210', 'M575 185L480 290L385 400L190 770', 'M305 430L130 690L110 730',
      'M125 325L330 440L385 470', 'M345 565L575 650', 'M150 565L190 595', 'M450 615L340 780', 'M170 770L430 840', 'M0 670L140 745',
      'M690 265L660 320L610 310L520 500', 'M470 340L510 350L700 510', 'M660 340L760 280', 'M660 320L700 420L710 510',
      'M765 545L490 850L470 1000', 'M740 560L830 700L900 870L940 1020L950 1130L930 1290', 'M660 690L690 720', 'M520 945L560 820L700 700L770 700L830 750',
      'M550 825L640 880L700 1290', 'M600 870L660 1000', 'M640 910L830 875', 'M750 750L800 870L830 1020L880 1290', 'M720 910L790 1150', 'M690 940L720 1015L770 1000',
      'M840 960L940 925', 'M850 1000L940 985', 'M870 1080L940 1060', 'M470 1080L790 1080', 'M840 960L850 1050L910 1080L920 1290', 'M30 1060L105 980', 'M80 1020L190 1100',
      'M195 1050L130 1130', 'M0 1090L130 1170L150 1290', 'M0 1130L70 1180', 'M560 1230L770 1290',
      'M930 365L1095 315', 'M900 270L960 210', 'M960 280L970 345', 'M1000 260L1030 335', 'M1180 260L1290 228',
      'M1040 740L1090 770L1100 810', 'M1045 780L1090 770', 'M1090 1155L1500 1165', 'M1000 360L990 260',
    ],
    majors: [
      ['M1165 220L1295 680', 8, '#f3eee0'], ['M970 530L1225 465', 10, '#f3eee0'],
      ['M650 0L400 370L0 980L-160 1240', 22, '#f8c967'],
      ['M715 0L720 90L812 400L865 600L925 800L985 1000L1050 1290', 24, '#fbf9f5'],
      ['M790 0L850 180L915 400L975 600L1030 800L1080 1000L1100 1150L1130 1290', 24, '#fbf9f5'],
      ['M745 0L860 370L990 860L1100 1290', 32, '#e8935a'],
      ['M955 590L985 690L965 700', 8, '#f8c967'],
      ['M915 415L810 435L770 465L715 540L590 680L470 820L460 860L435 930L425 1100L385 1240L340 1290', 24, '#fbf9f5'],
      ['M1045 845Q1180 830 1300 700Q1340 650 1400 630L1590 610', 22, '#fbf9f5'],
    ],
    rings: [[715, 540], [460, 862], [383, 1240]],
    blobs: ['663,900 720,870 740,850 755,885 670,922', '780,1165 825,1158 850,1260 820,1265 785,1240'],
    park: '1430,1145 1440,1107 1468,1130',
    pins: [{ x: 987, y: 190, c: '#7597a6', kind: 'dot' }, { x: 1450, y: 965, c: '#6f8fa0', kind: 'dot' }, { x: 1200, y: 1085, c: '#6f8fa0', kind: 'hat' }],
    labels: [
      ['Mustafabad', 60, 865, 57, 'd'], ['मुस्तफाबाद', 88, 915, 64, 'd'],
      ['Anvi Makeup Artist', 1038, 905, 54, 'g'],
      ['Gautam', 1398, 570, 58, 'd', 'middle'], ['Buddha Nagar', 1398, 625, 58, 'd', 'middle'],
      ['गौतम', 1402, 700, 66, 'd', 'middle'], ['बुद्धा नगर', 1402, 745, 66, 'd', 'middle'],
      ['JAYPEE', 628, 1090, 46, 'd', 'middle', 5], ['SPORTS CITY', 628, 1139, 46, 'd', 'middle', 5],
      ['जेपी स्पोर्ट्स', 628, 1195, 56, 'd', 'middle'], ['सिटी', 628, 1255, 56, 'd', 'middle'],
      ['Dankaur', 1512, 1192, 57, 'd', 'middle'], ['दनकौर', 1512, 1258, 64, 'd', 'middle'],
    ],
    rotated: [
      ['Eastern Peripheral Expy', 408, 375, 45, -52],
      ['Yamuna Expy (Tollroad)', 848, 385, 46, 74.500],
    ],
    river: null,
  },
  {
    x0: 1000,
    patches: [
      '480,0 600,0 640,90 700,110 640,170 500,200 470,200',
      '880,370 930,300 1000,340 1060,290 1090,240 1150,260 1150,320 1060,360 1040,410 1000,470 1050,560 1110,660 1000,710 950,740 920,780 880,780 860,710 780,640 700,600 600,610 580,600 640,540 760,470',
      '0,680 70,670 110,710 170,750 250,690 360,530 400,580 490,610 510,670 430,710 300,780 240,820 220,920 170,980 250,1040 320,1000 340,1060 470,1010 470,1060 400,1200 400,1290 0,1290',
      '850,920 890,880 960,930 1060,920 1080,790 1130,820 1100,920 1170,1000 1250,1050 1270,1250 1280,1290 800,1290 960,1000',
      '1270,180 1400,130 1400,200 1300,280 1180,230',
    ],
    clutter: [[31, 0, 720, 380, 560, 95], [32, 960, 560, 120, 100, 12], [33, 1280, 160, 140, 100, 12], [34, 980, 1120, 280, 160, 18]],
    roads: [
      'M450 190L405 250L360 340L345 430L360 490', 'M380 210L415 248', 'M570 225L690 100L745 28L768 55', 'M700 110L800 210L870 275', 'M680 85L700 110',
      'M840 35L850 65L930 100L1000 200L998 260L970 330', 'M940 155L1010 0', 'M1015 20L1105 80', 'M1130 130L1000 240', 'M900 120L940 155L1000 200', 'M1255 10L1320 60', 'M1040 85L1020 125L950 100',
      'M160 580L280 670', 'M500 640L320 740L240 790L160 850L40 850L0 870', 'M590 610L690 670L800 790L880 905L960 960',
      'M690 550L1000 790L1150 880L1200 905L1500 970', 'M525 810L430 940L370 1050L330 1130', 'M850 640L693 915', 'M745 965L900 1050L820 1290', 'M880 905L830 1010',
      'M1050 290L1140 220', 'M1050 290L1160 430L1280 530L1160 710', 'M1200 480L1300 620', 'M1120 345L1170 430L1220 390', 'M1020 410L1110 350', 'M1010 360L1050 440L1030 500L1130 595',
      'M1050 515L1115 550L1170 485', 'M1230 340L1280 405', 'M1290 670L1420 710', 'M1448 620L1375 940', 'M1205 760L1470 815', 'M1150 880L1080 1000', 'M1230 1100L1360 1170', 'M1360 1170L1290 1290',
      'M1290 970L1280 1020L1340 1110L1380 1110L1365 990', 'M540 1000L520 1035L580 1090L500 1180L480 1240', 'M340 1020L450 1010', 'M245 930L240 1040',
      'M440 1120L570 1180L710 1190L790 1225L1020 1260L1280 1260L1340 1240', 'M0 1050L250 1100L440 1140', 'M690 1095L630 1195', 'M590 400L640 470L680 510', 'M450 405L480 470L410 510', 'M380 570L420 540',
      'M1400 370L1470 445L1560 370', 'M1290 900L1260 910L1250 950L1310 920',
    ],
    majors: [
      ['M355 490L870 280', 17, '#f3eee0'],
      ['M-10 615L90 590L360 485L470 580L500 640', 21, '#fbf9f5'],
      ['M500 640L1050 290L1560 -20', 20, '#fbf9f5'],
    ],
    pins: [{ x: 428, y: 870, c: '#7086c9', kind: 'fuel' }],
    labels: [
      ['Ku', 515, 12, 54, 'd'], ['pur', 480, 68, 57, 'd'], ['का', 500, 127, 64, 'd'], ['पुर', 480, 187, 64, 'd'],
      ['Samspur', 1260, 255, 57, 'd', 'middle'], ['सम्सपुर', 1260, 310, 66, 'd', 'middle'],
      ['Gajan', 930, 487, 57, 'd', 'middle'], ['गजन', 930, 550, 66, 'd', 'middle'],
      ['Ch Dalgir Petrol Pump', 400, 760, 54, 'g'], ['च दलगीर पेट्रोल पम्प', 400, 812, 44, 'g'],
      ['Dareen', 1055, 1010, 57, 'd', 'middle'], ['Gujraan', 1055, 1068, 57, 'd', 'middle'], ['दरें गुजरान', 1055, 1140, 66, 'd', 'middle'],
      ['Mohammadpur', 960, 1232, 57, 'd', 'middle'], ['Gurjar', 960, 1290, 57, 'd', 'middle'],
      ['St 2', 712, 520, 38, 'r', 'start', 0, -35], ['St 2', 1318, 140, 38, 'r', 'start', 0, -33],
    ],
  },
  {
    x0: 1420,
    patches: [
      '300,0 730,0 720,40 600,90 540,125 490,60 320,45 295,90',
      '690,200 770,290 860,300 910,260 950,215 1000,240 1020,320 1065,350 1040,400 1090,470 1150,455 1190,560 1270,640 1280,660 1160,720 1050,650 1000,600 900,640 830,590 820,500 760,380 750,310',
      '250,750 430,690 500,770 500,860 450,920 510,990 430,1065 400,1000 220,1030 240,900',
      '1355,240 1400,170 1430,170 1430,280 1370,270',
      '980,1200 1130,1150 1200,1290 960,1290',
    ],
    clutter: [[41, 500, 0, 220, 80, 14], [42, 830, 300, 220, 300, 22], [43, 260, 880, 230, 140, 18], [44, 1060, 470, 180, 220, 14]],
    roads: [
      'M300 90L600 375', 'M195 185L410 385L490 470', 'M145 140L200 190', 'M295 95L140 235', 'M140 370L265 255L330 320L210 450L140 380L130 340L30 190L0 170',
      'M0 520L20 540L0 570', 'M0 570L42 620', 'M40 670L165 708', 'M188 618L115 940', 'M0 770L210 820', 'M205 885L185 960', 'M370 1010L335 1150L450 1175',
      'M390 590L365 680L365 750', 'M415 590L490 630L550 610', 'M490 630L540 680L565 665L550 630', 'M530 680L480 860', 'M415 505L470 505L560 530L620 580L725 475L860 590',
      'M800 535L665 685', 'M765 580L815 620L860 575', 'M490 50L690 210L770 290L1000 400L1100 490L1290 720', 'M880 0L950 130L970 250L985 340', 'M840 190L775 285', 'M880 140L800 260', 'M595 195L700 110',
      'M990 510L1000 620L1040 700L1150 790L1240 860L1330 935L1430 1020', 'M1190 640L1160 760L1140 900L1045 1080', 'M1180 730L1300 820', 'M1210 640L1355 725', 'M1000 630L925 750', 'M915 690L950 705',
      'M1170 520L1220 480L1290 490L1340 500L1430 545', 'M1290 490L1300 410L1380 260L1430 200', 'M1200 225L1340 325', 'M1030 320L1090 250L1140 270', 'M1290 120L1430 210', 'M1200 220L1285 125',
      'M855 925L698 1115', 'M1135 920L1260 1015L1320 1070L1390 1020', 'M1260 1015L1135 1170L1280 1200', 'M1330 935L1260 1015', 'M1055 950L1130 1000', 'M940 995L1040 1060', 'M900 1040L1130 1055', 'M1180 1115L1280 1205L1200 1290',
      'M450 865L610 905L580 1000L470 1100', 'M230 1080L335 1210', 'M0 1120L100 1180L50 1290', 'M120 1055L270 1045', 'M240 1000L210 1220L300 1290', 'M0 1260L200 1220L280 1290',
      'M415 400L470 370L465 395L430 415', 'M490 430L520 385L545 380',
    ],
    majors: [
      ['M445 0L420 300L410 520L425 700L445 950L465 1290', 7, '#f3eee0'],
      ['M0 915L440 1020', 7, '#f3eee0'],
      ['M1428 1045L1310 1290', 4, '#920070'],
    ],
    pins: [{ x: 1165, y: 192, c: '#f06292', kind: 'bed' }, { x: 1033, y: 1120, c: '#4f8fe8', kind: 'bag' }, { x: 928, y: 1222, c: '#6f8fa0', kind: 'dot' }],
    labels: [
      ['Bilaspur greater noida', 685, 83, 54, 'g'], ['बिलासपुर ग्रेटर नोएडा', 855, 137, 44, 'g'],
      ['T', 1393, 125, 50, 'd'], ['त', 1393, 175, 54, 'd'],
      ['Junedpur', 925, 405, 57, 'd', 'middle'], ['जुनेदपुर', 925, 480, 66, 'd', 'middle'],
      ['Roshanpur', 1183, 605, 57, 'd', 'middle'], ['रोशनपुर', 1183, 680, 66, 'd', 'middle'],
      ['Chachula', 332, 817, 57, 'd', 'middle'], ['चचूला', 332, 870, 66, 'd', 'middle'],
      ['Dahanori', 770, 1160, 52, 'g'], ['DR KULDEEPSINGH', 415, 1236, 52, 'g'],
    ],
  },
];

const labelFill = { d: '#574541', g: '#9a8d89', r: '#6d5c57' };

const MapDrawing = () => (
  <svg width="1878" height="427" viewBox="18 428 1878 427" fontFamily={MAP}>
    <rect x="18" y="428" width="1878" height="427" fill="#dfd2ae" />
    {regions.map(r => (
      <g key={r.x0} transform={`translate(${r.x0} 428) scale(${1 / 3})`}>
        {r.patches.map((p, i) => <polygon key={i} points={p} fill="#ebe3cd" />)}
        {r.river && <polygon points={r.river} fill="#920070" />}
        {r.clutter.map((c, i) => <path key={i} d={clutter(c[0], c[1], c[2], c[3], c[4], c[5])} stroke="#f5f1e6" strokeWidth="3.500" fill="none" />)}
        {(r.dashed || []).map((d, i) => <path key={i} d={d} stroke="#cfc3a3" strokeWidth="2.500" strokeDasharray="8 6" fill="none" />)}
        <path d={r.roads.join('')} stroke="#f6f2e8" strokeWidth="4.500" fill="none" strokeLinejoin="round" />
      </g>
    ))}
    {regions.map(r => (
      <g key={r.x0} transform={`translate(${r.x0} 428) scale(${1 / 3})`}>
        {r.majors.map((m, i) => <path key={i} d={m[0]} stroke={m[2]} strokeWidth={m[1]} fill="none" strokeLinejoin="round" />)}
        {(r.rings || []).map((c, i) => <circle key={i} cx={c[0]} cy={c[1]} r="18" fill="#dfd2ae" stroke="#fbf9f5" strokeWidth="14" />)}
        {(r.blobs || []).map((p, i) => <polygon key={i} points={p} fill="#8d0070" stroke="#8d0070" strokeWidth="3" strokeLinejoin="round" />)}
        {r.park && <polygon points={r.park} fill="#a8b070" />}
      </g>
    ))}
    <g transform="translate(0 428) scale(0.3333)">
      <text x="0" y="0" transform="translate(222 375) rotate(-90)" fontSize="50" fill="#b796ae">यमुना नदी</text>
    </g>
    {regions.map(r => (
      <g key={r.x0} transform={`translate(${r.x0} 428) scale(${1 / 3})`}>
        {r.pins.map((p, i) => <MapPin key={i} {...p} />)}
        {r.labels.map((l, i) => (
          <text key={i} x={l[1]} y={l[2]} fontSize={l[3]} fill={labelFill[l[4]]} textAnchor={l[5] || 'start'} letterSpacing={l[6] || 0}
            stroke="#efe7d3" strokeWidth="5" paintOrder="stroke" strokeOpacity=".75"
            transform={l[7] ? `rotate(${l[7]} ${l[1]} ${l[2]})` : undefined}>{l[0]}</text>
        ))}
        {(r.rotated || []).map((l, i) => (
          <text key={i} transform={`translate(${l[1]} ${l[2]}) rotate(${l[4]})`} fontSize={l[3]} fill="#6d5c57" stroke="#efe7d3" strokeWidth="4" paintOrder="stroke" strokeOpacity=".8">{l[0]}</text>
        ))}
      </g>
    ))}
    <g transform="translate(500 428) scale(0.3333)">
      <path d="M1398 635C1385 600 1351 580 1351 546a47 47 0 1 1 94 0C1445 580 1411 600 1398 635z" fill="#ea4335" stroke="#d9372a" strokeWidth="2" />
      <circle cx="1398" cy="546" r="18" fill="#b31412" />
    </g>
    <text x="30" y="843" fontSize="23" fontWeight="500" fill="#fff" stroke="#8a8a7a" strokeWidth=".6" paintOrder="stroke">Google</text>
  </svg>
);

const tabsA = [['yt', '(123'], ['leaf', 'Deed'], ['leaf', 'Deed'], ['leaf', 'Nikh'], ['owl', 'Code'], ['bars', 'Nikh'], ['lc', 'nikh'], ['lcd', 'Prob'], ['lcd', 'Long'], ['lc', 'Mini'], ['gpt', 'Chat'], ['maps', 'findr'], ['sd', 'strin'], ['sd', 'goog'], ['maps', 'Over'], ['gg', 'Sear']];
const tabsB = [['maps', 'Beni'], ['sb', 'dott'], ['nw', 'New'], ['gh', 'r-nik']];

export default function App() {
  return (
    <Screen>
      <Global />
      <TabStrip>
        <Leading><Avatar /><Workspaces /><VerticalSlot><VerticalTabs /></VerticalSlot></Leading>
        {tabsA.map((t, i) => (
          <Tab key={i} $noSep={i === tabsA.length - 1}>
            <TabIconSlot>{favicon[t[0]]}</TabIconSlot><TabLabel>{t[1]}</TabLabel>
          </Tab>
        ))}
        <ActiveTab><ReactChip><Atom /></ReactChip><X size={16} color="#e8e8e8" /></ActiveTab>
        {tabsB.map((t, i) => (
          <Tab key={i} $w={70}>
            <TabIconSlot $w={39}>{favicon[t[0]]}</TabIconSlot><TabLabel>{t[1]}</TabLabel>
          </Tab>
        ))}
        <NewTab><Plus size={22} strokeWidth={1.4} color="#eee" /></NewTab>
        <WindowControls>
          <Minus size={15} color="#f4f4f4" strokeWidth={1.6} />
          <Copy size={15} color="#f4f4f4" strokeWidth={1.5} />
          <X size={20} color="#f4f4f4" strokeWidth={1.4} />
        </WindowControls>
      </TabStrip>

      <Toolbar>
        <NavButtons>
          <ArrowLeft size={23} strokeWidth={1.3} color="#7d7d7d" />
          <RotateCw size={20} strokeWidth={1.4} color="#eee" />
        </NavButtons>
        <AddressBar>
          <Info size={20} strokeWidth={1.3} color="#eee" />
          <UrlText><b>localhost</b>:3000/api/places?lat=48.8575475&amp;lng=2.3513765</UrlText>
          <AddressTools>
            <SplitAdd /><ReadAloud /><Star size={21} strokeWidth={1.3} color="#8f8f8f" />
          </AddressTools>
        </AddressBar>
        <ToolGroup>
          <ToolSlot><GrayTabs /></ToolSlot>
          <ToolSlot><GreenPlus /></ToolSlot>
          <ToolSlot><Cart /></ToolSlot>
          <ToolSlot><Puzzle size={20} strokeWidth={1.3} /></ToolSlot>
          <ToolSep />
          <ToolSlot><Columns2 size={20} strokeWidth={1.3} /></ToolSlot>
          <ToolSlot><FavList /></ToolSlot>
          <ToolSlot><Collections /></ToolSlot>
          <ToolSlot><HeartCheck /></ToolSlot>
          <ToolSlot><Ellipsis size={20} strokeWidth={1.5} /></ToolSlot>
          <ToolSlot><CopilotTb /></ToolSlot>
        </ToolGroup>
      </Toolbar>

      <Bookmarks>
        <Bookmark $mr={0}><ImportFav />Import favorites</Bookmark>
        <BookSep />
        <Bookmark><Gmail />Gmail</Bookmark>
        <Bookmark><MapsIcon s={21} />Maps</Bookmark>
        <Bookmark><Yt />C++ Tutorials CWH</Bookmark>
        <Bookmark><Tuf />Strivers A2Z DSA Co...</Bookmark>
        <Bookmark><SBook />Senior</Bookmark>
        <BookRight>
          <BookSep />
          <Bookmark $mr={0}><Folder />Other favorites</Bookmark>
        </BookRight>
      </Bookmarks>

      <WindowBody>
        <ScrollRow>
          <Page>
            <Nav>
              <Brand>Restaurant <BrandBadge>Finder</BrandBadge></Brand>
              <Tagline>Every meal is a new culinary journey!|</Tagline>
            </Nav>
            <Hero>
              <Title>Find Nearby Restaurants</Title>
              <Lead>“Find nearby restaurants, explore new dining options, check distances, ratings, and view them on Google Maps.”</Lead>
            </Hero>
            <MapFrame>
              <MapDrawing />
              <PopupCard>
                <PopupWell><PopupInput>Gautam Buddha Nagar, Uttar Pradesh, India</PopupInput></PopupWell>
              </PopupCard>
              <Attribution>
                <span>Keyboard shortcuts</span><span>Map Data ©2024</span><span>Terms</span><span>Report a map error</span>
              </Attribution>
            </MapFrame>
            <Results>
              <ActionRow>
                <ActionButton>Search My Location</ActionButton>
                <ActionButton $danger>Reset</ActionButton>
              </ActionRow>
              <CardRow>
                <Card><CardTitle>Maharaja restaurant</CardTitle></Card>
                <Card><CardTitle>Vishal dhaba</CardTitle></Card>
                <Card><CardTitle>PARTH CAFE</CardTitle></Card>
              </CardRow>
            </Results>
          </Page>
          <VScroll><ArrowUp /><VThumb /><ArrowDown /></VScroll>
        </ScrollRow>
        <HScroll><ArrowL /><HThumb /><ArrowR /></HScroll>
      </WindowBody>

      <Taskbar>
        <TaskLeft><Widgets /></TaskLeft>
        <TaskCenter>
          <StartSlot><WinLogo /></StartSlot>
          <SearchPill><Search size={20} strokeWidth={1.6} color="#e8e8f0" />Search<Taco /></SearchPill>
          <TaskSlot><TaskView /></TaskSlot>
          <TaskSlot><CopilotBar /></TaskSlot>
          <TaskSlot><Teams /></TaskSlot>
          <TaskSlot><Store /></TaskSlot>
          <TaskSlot $dot><Explorer /></TaskSlot>
          <TaskSlot $dot $active><Edge /></TaskSlot>
          <TaskSlot $dot><VsCode /></TaskSlot>
          <TaskSlot><Sublime /></TaskSlot>
          <TaskSlot $dot><FaWhatsapp size={32} color="#25d366" /><Badge>1</Badge></TaskSlot>
        </TaskCenter>
        <Tray>
          <ChevronUp size={20} strokeWidth={1.6} />
          <Lang>ENG<br />IN</Lang>
          <TrayIcons><Wifi size={18} strokeWidth={1.6} /><Volume2 size={19} strokeWidth={1.4} /><BatteryPlug /></TrayIcons>
          <Clock>21:03<br />16-09-2024</Clock>
          <Bell size={20} fill="#a9e4ff" color="#a9e4ff" />
        </Tray>
      </Taskbar>
    </Screen>
  );
}
